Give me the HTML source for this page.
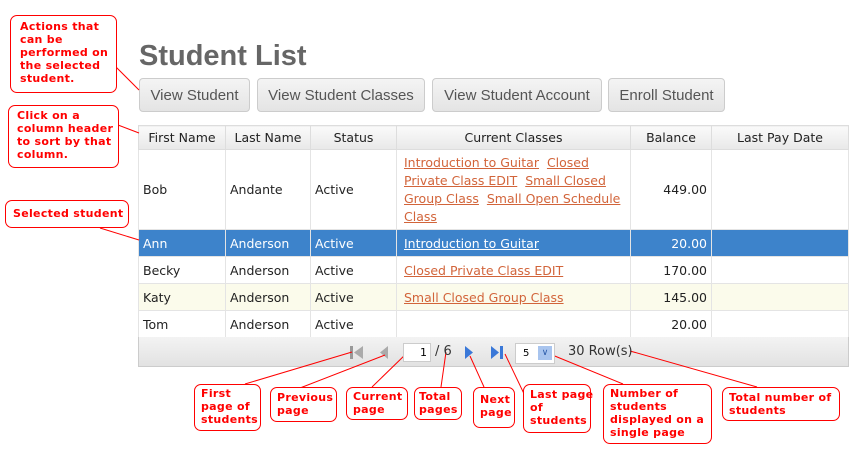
<!DOCTYPE html>
<html><head><style>
*{margin:0;padding:0;box-sizing:border-box}
body{width:862px;height:449px;background:#fff;position:relative;overflow:hidden;font-family:"DejaVu Sans",Verdana,sans-serif}
.c{position:absolute;border:1px solid #f00;border-radius:7px;background:#fff;color:#f00;font:bold 11px/13px "DejaVu Sans",Verdana,sans-serif;letter-spacing:0.3px;padding:2px 6px;white-space:nowrap}
h1{position:absolute;left:139px;top:40px;font:bold 29px "Liberation Sans",Arial,sans-serif;color:#666}
.b{position:absolute;top:78px;height:34px;border:1px solid #ccc;border-radius:4px;background:linear-gradient(#f4f4f4,#e4e4e4);font:15px "Liberation Sans",Arial,sans-serif;color:#555;text-align:center;line-height:33px}
table{position:absolute;left:138px;top:125px;width:711px;border-collapse:collapse;font-size:12.5px;color:#222;border:1px solid #ccc;table-layout:fixed}
th{height:24px;font-weight:normal;background:linear-gradient(#fafafa,#e8e8e8);border:1px solid #ddd;text-align:center;color:#222}
td{border:1px solid #e4e4e4;padding:0 4px;height:27px;vertical-align:middle;overflow:hidden}
td a{color:#d2643a;text-decoration:underline}
.s td{background:#3d83cb;color:#fff}.s td a{color:#fff}
.k td{background:#fbfbeb}
.r{text-align:right}
.cc{padding-left:7px;font-size:12.5px;white-space:nowrap}
.pg{position:absolute;left:138px;top:337px;width:711px;height:30px;border:1px solid #ccc;border-top:none;background:linear-gradient(#f3f3f3,#e2e2e2)}
</style></head><body>
<h1>Student List</h1>
<div class="b" style="left:139px;width:111px">View Student</div>
<div class="b" style="left:257px;width:168px">View Student Classes</div>
<div class="b" style="left:432px;width:170px">View Student Account</div>
<div class="b" style="left:608px;width:117px">Enroll Student</div>
<table>
<tr><th style="width:87px">First Name</th><th style="width:85px">Last Name</th><th style="width:86px">Status</th><th style="width:234px">Current Classes</th><th style="width:81px">Balance</th><th>Last Pay Date</th></tr>
<tr><td style="height:80px">Bob</td><td>Andante</td><td>Active</td><td class="cc" style="line-height:18px"><a>Introduction to Guitar</a>&nbsp; <a>Closed</a><br><a>Private Class EDIT</a>&nbsp; <a>Small Closed</a><br><a>Group Class</a>&nbsp; <a>Small Open Schedule</a><br><a>Class</a></td><td class="r">449.00</td><td></td></tr>
<tr class="s"><td>Ann</td><td>Anderson</td><td>Active</td><td class="cc"><a>Introduction to Guitar</a></td><td class="r">20.00</td><td></td></tr>
<tr><td>Becky</td><td>Anderson</td><td>Active</td><td class="cc"><a>Closed Private Class EDIT</a></td><td class="r">170.00</td><td></td></tr>
<tr class="k"><td>Katy</td><td>Anderson</td><td>Active</td><td class="cc"><a>Small Closed Group Class</a></td><td class="r">145.00</td><td></td></tr>
<tr><td>Tom</td><td>Anderson</td><td>Active</td><td></td><td class="r">20.00</td><td></td></tr>
</table>
<div class="pg"></div>
<svg style="position:absolute;left:0;top:0" width="862" height="449">
<rect x="350" y="346" width="3" height="13" fill="#999"/><path d="M363 346 L354 352.5 L363 359Z" fill="#aaa"/>
<path d="M388 346 L380 352.5 L388 359Z" fill="#aaa"/>
<path d="M465 346 L473 352.5 L465 359Z" fill="#3a78d8"/>
<path d="M491 346 L499 352.5 L491 359Z" fill="#3a78d8"/><rect x="500" y="346" width="3" height="13" fill="#3a78d8"/>
<g stroke="#f00" stroke-width="1" fill="none">
<path d="M116 67 L139 90"/><path d="M118 125 L139 133"/><path d="M100 228 L139 240"/>
<path d="M245 384 L352 352"/><path d="M300 388 L385 355"/><path d="M372 387 L408 352"/><path d="M441 387 L446 352"/><path d="M484 387 L470 356"/><path d="M527 400 L505 354"/><path d="M623 384 L545 352"/><path d="M757 387 L630 351"/>
</g>
</svg>
<div style="position:absolute;left:403px;top:343px;width:28px;height:19px;border:1px solid #ccc;background:#fff;font-size:11px;text-align:right;padding-right:3px;line-height:17px">1</div>
<div style="position:absolute;left:435px;top:344px;font-size:13px;color:#333">/ 6</div>
<div style="position:absolute;left:515px;top:343px;width:40px;height:21px;border:1px solid #ccc;background:#fff;font-size:10px;line-height:19px;padding-left:7px">5<span style="position:absolute;right:2px;top:2px;width:14px;height:14px;background:#a8c4ee;color:#2a5aa8;font-size:9px;line-height:14px;text-align:center">&#8744;</span></div>
<div style="position:absolute;left:568px;top:344px;font-size:13px;color:#333">30 Row(s)</div>
<div class="c" style="left:10px;top:15px;width:107px;height:78px;padding:4px 9px">Actions that<br>can be<br>performed on<br>the selected<br>student.</div>
<div class="c" style="left:8px;top:105px;width:111px;height:63px;padding:3px 8px">Click on a<br>column header<br>to sort by that<br>column.</div>
<div class="c" style="left:5px;top:200px;width:124px;height:28px;line-height:22px;padding-left:7px">Selected student</div>
<div class="c" style="left:194px;top:384px;width:67px;height:47px">First<br>page of<br>students</div>
<div class="c" style="left:270px;top:387px;width:67px;height:35px;padding-top:3px">Previous<br>page</div>
<div class="c" style="left:346px;top:387px;width:62px;height:33px">Current<br>page</div>
<div class="c" style="left:414px;top:387px;width:48px;height:33px;padding:2px 4px">Total<br>pages</div>
<div class="c" style="left:473px;top:387px;width:42px;height:41px;padding-top:5px">Next<br>page</div>
<div class="c" style="left:523px;top:384px;width:68px;height:49px;padding-top:3px">Last page<br>of<br>students</div>
<div class="c" style="left:603px;top:384px;width:109px;height:60px;padding-top:2px">Number of<br>students<br>displayed on a<br>single page</div>
<div class="c" style="left:722px;top:387px;width:118px;height:34px;padding-top:3px">Total number of<br>students</div>
</body></html>
